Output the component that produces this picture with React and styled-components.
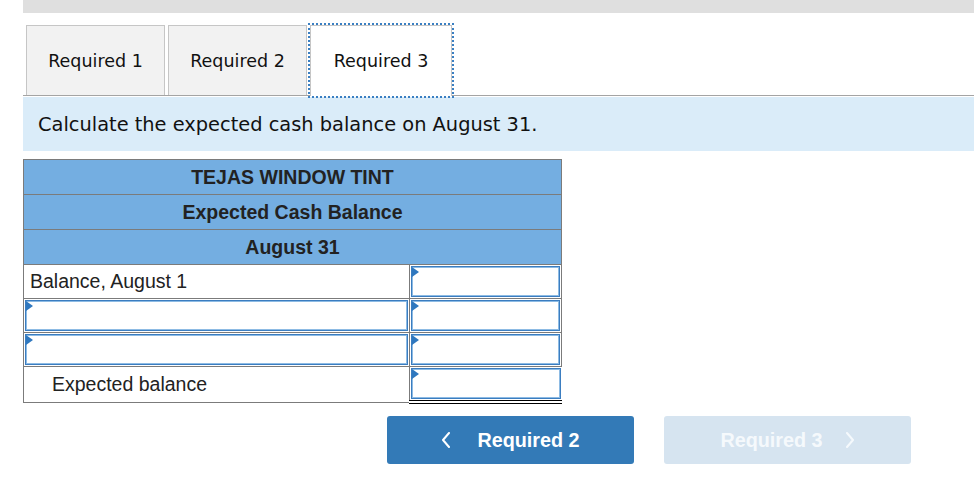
import React from "react";
import styled, { createGlobalStyle } from "styled-components";

const GlobalStyle = createGlobalStyle`
  body {
    margin: 0;
    background: #ffffff;
  }
`;

const Page = styled.div`
  padding-left: 23px;
`;

const TopBar = styled.div`
  height: 13px;
  background: #dfdfdf;
`;

const TabList = styled.div`
  display: flex;
  gap: 3px;
  height: 70px;
  margin-top: 12px;
  padding-left: 3px;
  border-bottom: 1px solid #a4a4a4;
`;

const Tab = styled.div`
  box-sizing: border-box;
  width: ${(p) => (p.$active ? "142px" : "139px")};
  height: ${(p) => (p.$active ? "71px" : "70px")};
  display: flex;
  align-items: center;
  justify-content: center;
  background: ${(p) => (p.$active ? "#ffffff" : "#f2f2f2")};
  border: 1px solid #c6c6c6;
  border-bottom: none;
  outline: ${(p) => (p.$active ? "2px dotted #3a7fc2" : "none")};
  font-family: "DejaVu Sans", Verdana, sans-serif;
  font-size: 17.5px;
  color: #111;
`;

const Instruction = styled.div`
  height: 54px;
  margin-top: 1px;
  display: flex;
  align-items: center;
  padding-left: 15px;
  background: #daecf9;
  font-family: "DejaVu Sans", Verdana, sans-serif;
  font-size: 19.4px;
  color: #111;
`;

const Sheet = styled.table`
  margin-top: 8px;
  width: 539px;
  border-collapse: collapse;
  font-family: "Liberation Sans", Arial, sans-serif;
  font-size: 19.5px;
  color: #222;
`;

const HeadCell = styled.th`
  height: 34px;
  padding: 0;
  background: #74aee1;
  border: 1px solid #7b7b7b;
  font-weight: bold;
  text-align: center;
`;

const LabelCell = styled.td`
  box-sizing: border-box;
  height: 34px;
  width: 386px;
  padding: 0 0 0 ${(p) => p.$indent || 6}px;
  border: 1px solid #7b7b7b;
`;

const AmountCell = styled.td`
  box-sizing: border-box;
  height: 34px;
  padding: 1px;
  border: 1px solid #7b7b7b;
  border-top: ${(p) => (p.$total ? "1px solid #000" : "1px solid #7b7b7b")};
  border-bottom: ${(p) => (p.$total ? "4px double #000" : "1px solid #7b7b7b")};
  border-right: ${(p) => (p.$total ? "none" : "1px solid #7b7b7b")};
`;

const InputCell = styled.td`
  box-sizing: border-box;
  height: 34px;
  padding: 1px;
  border: 1px solid #7b7b7b;
`;

const Field = styled.div`
  position: relative;
  box-sizing: border-box;
  height: 31px;
  border: 1px solid #3b7dc0;
  box-shadow: inset 0 0 0 1px #8dbbe4;
  background: #fff;

  &::before {
    content: "";
    position: absolute;
    left: 0;
    top: 0;
    border-top: 5px solid transparent;
    border-bottom: 5px solid transparent;
    border-left: 7px solid #2f78bf;
  }
`;

const ButtonRow = styled.div`
  display: flex;
  gap: 30px;
  margin-top: 12px;
  padding-left: 364px;
`;

const NavButton = styled.div`
  box-sizing: border-box;
  width: 247px;
  height: 48px;
  display: flex;
  align-items: center;
  justify-content: center;
  gap: ${(p) => (p.$next ? "22px" : "26px")};
  border-radius: 3px;
  background: ${(p) => (p.$disabled ? "#d6e4f0" : "#337ab7")};
  color: ${(p) => (p.$disabled ? "#f5f9fc" : "#ffffff")};
  font-family: "Liberation Sans", Arial, sans-serif;
  font-weight: bold;
  font-size: 19.8px;
`;

const Chevron = ({ dir }) => (
  <svg width="10" height="16" viewBox="0 0 10 16" fill="none">
    <polyline
      points={dir === "left" ? "8,1 2,8 8,15" : "2,1 8,8 2,15"}
      stroke="currentColor"
      strokeWidth="2"
      strokeLinecap="round"
      strokeLinejoin="round"
    />
  </svg>
);

export default function App() {
  return (
    <Page>
      <GlobalStyle />
      <TopBar />
      <TabList>
        <Tab>Required 1</Tab>
        <Tab>Required 2</Tab>
        <Tab $active>Required 3</Tab>
      </TabList>
      <Instruction>Calculate the expected cash balance on August 31.</Instruction>
      <Sheet>
        <thead>
          <tr>
            <HeadCell colSpan={2}>TEJAS WINDOW TINT</HeadCell>
          </tr>
          <tr>
            <HeadCell colSpan={2}>Expected Cash Balance</HeadCell>
          </tr>
          <tr>
            <HeadCell colSpan={2}>August 31</HeadCell>
          </tr>
        </thead>
        <tbody>
          <tr>
            <LabelCell>Balance, August 1</LabelCell>
            <AmountCell>
              <Field />
            </AmountCell>
          </tr>
          <tr>
            <InputCell>
              <Field />
            </InputCell>
            <AmountCell>
              <Field />
            </AmountCell>
          </tr>
          <tr>
            <InputCell>
              <Field />
            </InputCell>
            <AmountCell>
              <Field />
            </AmountCell>
          </tr>
          <tr>
            <LabelCell $indent={28}>Expected balance</LabelCell>
            <AmountCell $total>
              <Field />
            </AmountCell>
          </tr>
        </tbody>
      </Sheet>
      <ButtonRow>
        <NavButton>
          <Chevron dir="left" />
          <span>Required 2</span>
        </NavButton>
        <NavButton $disabled $next>
          <span>Required 3</span>
          <Chevron dir="right" />
        </NavButton>
      </ButtonRow>
    </Page>
  );
}
